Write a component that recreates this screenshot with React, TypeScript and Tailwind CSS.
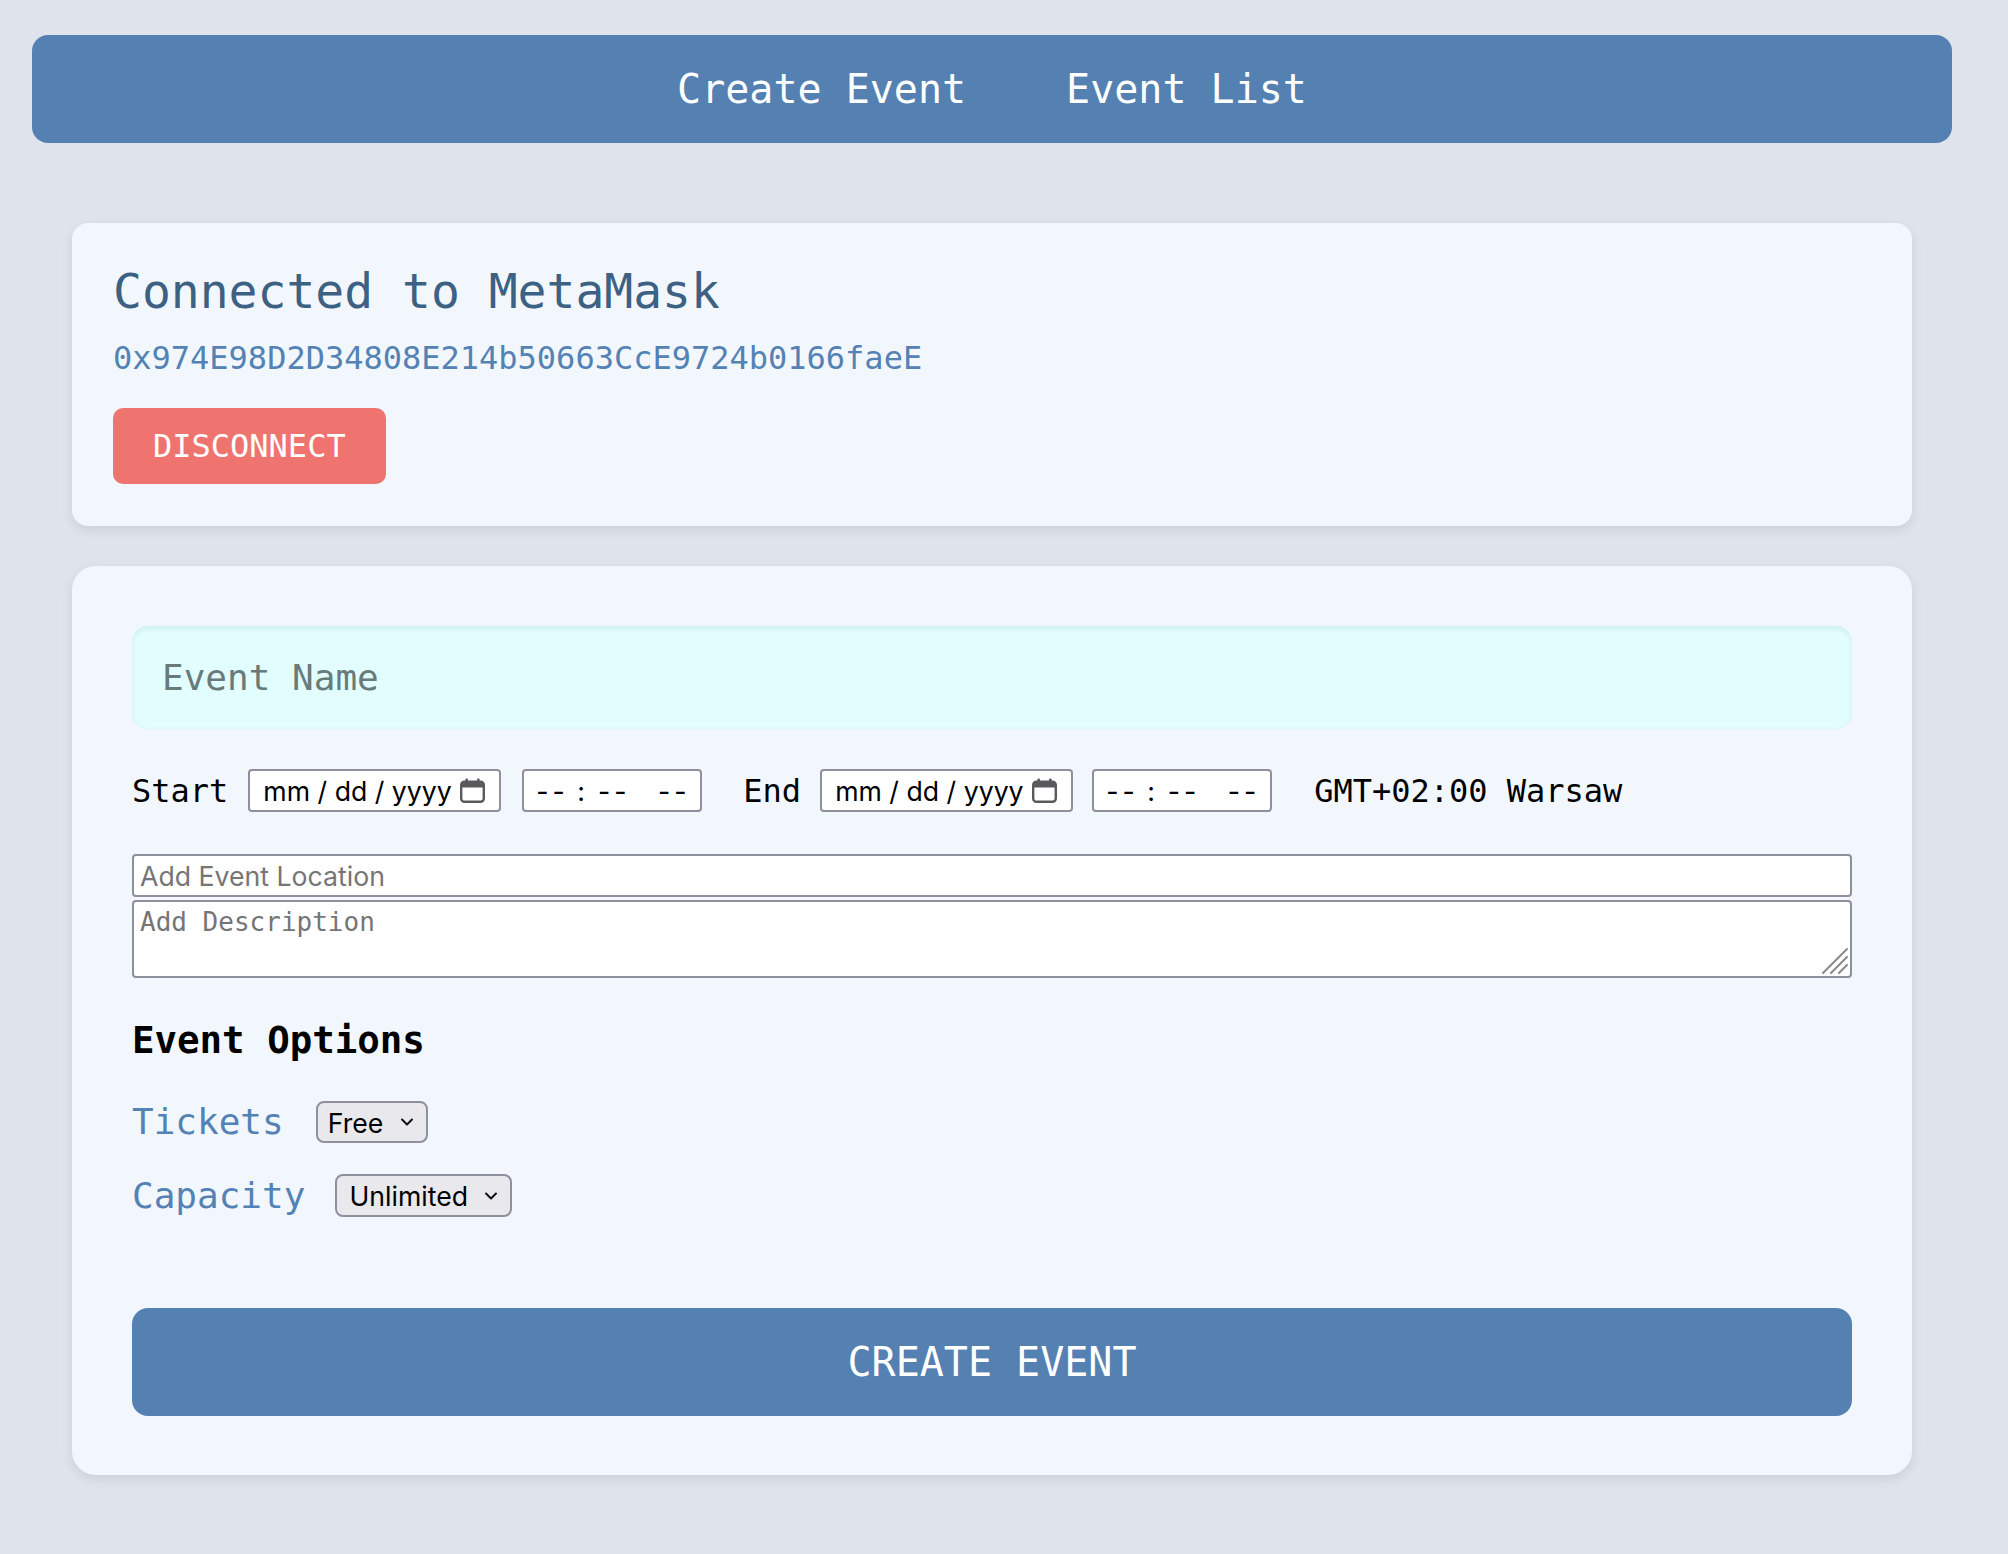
import React from "react";

const mono = "font-['DejaVu_Sans_Mono','Liberation_Mono',monospace]";
const sans = "font-['Inter','Roboto','Liberation_Sans',sans-serif]";

function Chevron() {
  return (
    <svg width="14" height="10" viewBox="0 0 14 10" className="pointer-events-none absolute right-[14px] top-1/2 -translate-y-1/2">
      <path d="M2 2.5 L7 7.5 L12 2.5" fill="none" stroke="#111" strokeWidth="2" strokeLinecap="round" strokeLinejoin="round" />
    </svg>
  );
}

function CalendarIcon() {
  return (
    <svg width="27" height="27" viewBox="0 0 27 27" className="shrink-0">
      <rect x="2.2" y="4.6" width="22.6" height="20.2" rx="3.2" fill="none" stroke="#5a5a5e" strokeWidth="2.4" />
      <path d="M2.2 8 Q2.2 4.6 5.4 4.6 L21.6 4.6 Q24.8 4.6 24.8 8 L24.8 10.6 L2.2 10.6 Z" fill="#5a5a5e" />
      <rect x="6.4" y="1.6" width="2.6" height="4.5" rx="1" fill="#5a5a5e" />
      <rect x="18" y="1.6" width="2.6" height="4.5" rx="1" fill="#5a5a5e" />
    </svg>
  );
}

function DateField() {
  return (
    <div
      role="textbox"
      className={`${sans} flex h-[43px] w-[253px] items-center justify-between rounded-[4px] border-2 border-[#8f8f9d] bg-white pl-[13px] pr-[13px] text-[26.67px] text-black`}
    >
      <span className="whitespace-pre">mm / dd / yyyy</span>
      <CalendarIcon />
    </div>
  );
}

function Dashes({ className = "" }: { className?: string }) {
  return <span className={`inline-block w-[28px] whitespace-nowrap tracking-[4px] ${className}`}>--</span>;
}

function TimeField() {
  return (
    <div
      role="textbox"
      className={`${sans} flex h-[43px] w-[180px] items-center whitespace-nowrap rounded-[4px] border-2 border-[#8f8f9d] bg-white pl-[12px] text-[26.67px] text-black`}
    >
      <Dashes />
      <span className="ml-[13px]">:</span>
      <Dashes className="ml-[13px]" />
      <Dashes className="ml-[32px]" />
    </div>
  );
}

function ResizeHandle() {
  return (
    <svg width="26" height="26" viewBox="0 0 26 26" className="pointer-events-none absolute bottom-[4px] right-[4px]">
      <path d="M1 25 L25 1 M9 25 L25 9 M17 25 L25 17" stroke="#8a8a8e" strokeWidth="2" strokeLinecap="round" />
    </svg>
  );
}

export default function App() {
  return (
    <div className={`${mono} min-h-[1554px] w-full bg-[#dfe3eb]`}>
      <div className="w-[1984px] px-[32px] pt-[35px] pb-[79px]">
        <nav className="flex h-[108px] items-center justify-center gap-[100px] rounded-[16px] bg-[#5480b2] text-[40px] text-white">
          <a className="cursor-pointer">Create Event</a>
          <a className="cursor-pointer">Event List</a>
        </nav>

        <div className="mx-[40px] mt-[80px] flex flex-col items-start rounded-[16px] bg-[#f2f7fe] px-[41px] pt-[40px] pb-[42px] shadow-[0_4px_12px_rgba(0,0,0,0.09)]">
          <h2 className="text-[48px] leading-[56px] text-[#3c6183]">Connected to MetaMask</h2>
          <p className="mt-[21px] text-[32px] leading-[37px] text-[#5482b4]">0x974E98D2D34808E214b50663CcE9724b0166faeE</p>
          <button className="mt-[31px] h-[76px] rounded-[10px] bg-[#ef7470] px-[40px] text-[32px] text-white">DISCONNECT</button>
        </div>

        <div className="mx-[40px] mt-[40px] flex flex-col rounded-[24px] bg-[#f2f7fe] px-[60px] pt-[60px] pb-[59px] shadow-[0_4px_12px_rgba(0,0,0,0.09)]">
          <input
            type="text"
            placeholder="Event Name"
            className={`${mono} h-[103px] w-full rounded-[16px] bg-[#e1fdfe] px-[30px] text-[36px] text-[#333] placeholder:text-[#687a7a] shadow-[inset_0_2px_5px_rgba(0,90,100,0.10)] outline-none`}
          />

          <div className="mt-[40px] flex h-[43px] items-center text-[32px] text-black">
            <span>Start</span>
            <div className="ml-[20px]"><DateField /></div>
            <div className="ml-[21px]"><TimeField /></div>
            <span className="ml-[41px]">End</span>
            <div className="ml-[19px]"><DateField /></div>
            <div className="ml-[19px]"><TimeField /></div>
            <span className="ml-[42px]">GMT+02:00 Warsaw</span>
          </div>

          <input
            type="text"
            placeholder="Add Event Location"
            className={`${sans} mt-[42px] h-[43px] w-full rounded-[4px] border-2 border-[#8f8f9d] bg-white px-[6px] text-[26.67px] text-black placeholder:text-[#757575]`}
          />
          <div className="relative mt-[3px]">
            <textarea
              placeholder="Add Description"
              className={`${mono} block h-[78px] w-full resize-none rounded-[4px] border-2 border-[#8f8f9d] bg-white px-[6px] pt-[5px] text-[26px] leading-[31px] text-black placeholder:text-[#757575]`}
            />
            <ResizeHandle />
          </div>

          <h3 className="mt-[40px] text-[37.44px] font-bold leading-[44px] text-black">Event Options</h3>

          <div className="mt-[39px] flex h-[42px] items-center">
            <label className="text-[36px] text-[#5482b4]">Tickets</label>
            <div className="relative ml-[32px]">
              <select className={`${sans} h-[42px] w-[112px] appearance-none rounded-[8px] border-2 border-[#8f8f9d] bg-[#e9e9ed] pl-[10px] text-[26.67px] text-black`}>
                <option>Free</option>
                <option>Paid</option>
              </select>
              <Chevron />
            </div>
          </div>

          <div className="mt-[31px] flex h-[43px] items-center">
            <label className="text-[36px] text-[#5482b4]">Capacity</label>
            <div className="relative ml-[30px]">
              <select className={`${sans} h-[43px] w-[177px] appearance-none rounded-[8px] border-2 border-[#8f8f9d] bg-[#e9e9ed] pl-[12px] text-[26.67px] text-black`}>
                <option>Unlimited</option>
                <option>Limited</option>
              </select>
              <Chevron />
            </div>
          </div>

          <button className="mt-[91px] h-[108px] w-full rounded-[16px] bg-[#5480b2] text-[40px] text-white">CREATE EVENT</button>
        </div>
      </div>
    </div>
  );
}
